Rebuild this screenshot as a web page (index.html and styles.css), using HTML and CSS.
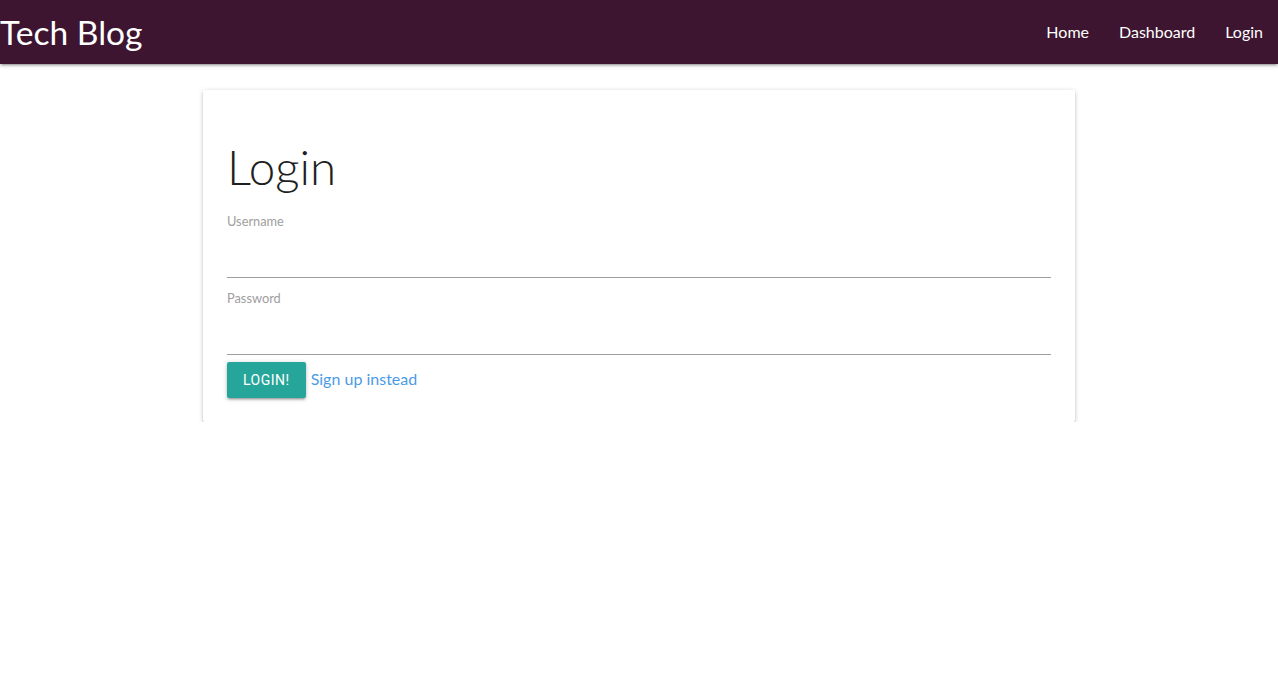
FILE: index.html
```html
<!DOCTYPE html>
<html lang="en">
<head>
<meta charset="utf-8">
<title>Tech Blog</title>
<link rel="stylesheet" href="styles.css">
</head>
<body>
<nav class="navbar">
  <a class="brand" href="#">Tech Blog</a>
  <ul class="nav-links">
    <li><a href="#">Home</a></li>
    <li><a href="#">Dashboard</a></li>
    <li><a href="#">Login</a></li>
  </ul>
</nav>
<main class="container">
  <div class="card">
    <h3 class="title">Login</h3>
    <form class="form">
      <div class="field">
        <label class="label" for="username">Username</label>
        <input class="input" id="username" type="text">
      </div>
      <div class="field field-last">
        <label class="label" for="password">Password</label>
        <input class="input" id="password" type="password">
      </div>
      <div class="actions">
        <button class="btn" type="button">Login!</button>
        <a class="link" href="#">Sign up instead</a>
      </div>
    </form>
  </div>
</main>
</body>
</html>
```
FILE: styles.css
```css
* { box-sizing: border-box; }
html, body { margin: 0; padding: 0; }
body {
  font-family: "Lato", "Noto Sans", sans-serif;
  color: rgba(0,0,0,0.87);
  background: #fff;
}
.navbar {
  height: 64px;
  background: #3d1530;
  display: flex;
  align-items: center;
  justify-content: space-between;
  box-shadow: 0 2px 2px 0 rgba(0,0,0,0.14), 0 3px 1px -2px rgba(0,0,0,0.12), 0 1px 5px 0 rgba(0,0,0,0.2);
}
.brand {
  color: #fff;
  text-decoration: none;
  font-size: 33.6px;
  font-weight: 400;
  line-height: 64px;
}
.nav-links {
  list-style: none;
  margin: 0;
  padding: 0;
  display: flex;
}
.nav-links a {
  display: block;
  padding: 0 15px;
  color: #fff;
  text-decoration: none;
  font-size: 16px;
  line-height: 64px;
}
.container {
  width: 872px;
  margin: 26px auto 0;
}
.card {
  background: #fff;
  padding: 24px;
  border-radius: 2px;
  box-shadow: 0 2px 2px 0 rgba(0,0,0,0.14), 0 3px 1px -2px rgba(0,0,0,0.12), 0 1px 5px 0 rgba(0,0,0,0.2);
}
.title {
  font-size: 47.5px;
  font-weight: 300;
  line-height: 51px;
  margin: 27px 0 22px;
  color: #1f1f1f;
}
.form { display: flex; flex-direction: column; }
.field { display: flex; flex-direction: column; margin-bottom: 13px; }
.field-last { margin-bottom: 7px; }
.label {
  font-size: 12.8px;
  line-height: 14px;
  color: #9e9e9e;
}
.input {
  height: 50px;
  border: none;
  border-bottom: 1px solid #9e9e9e;
  outline: none;
  background: transparent;
  font-size: 16px;
  padding: 0;
}
.actions { display: flex; align-items: center; gap: 5px; }
.btn {
  height: 36px;
  padding: 0 16px;
  border: none;
  border-radius: 2px;
  background: #26a69a;
  color: #fff;
  font-family: "Roboto", sans-serif;
  font-size: 14px;
  font-weight: 400;
  text-transform: uppercase;
  letter-spacing: 0.5px;
  box-shadow: 0 2px 2px 0 rgba(0,0,0,0.14), 0 3px 1px -2px rgba(0,0,0,0.12), 0 1px 5px 0 rgba(0,0,0,0.2);
}
.link {
  color: #4a9be6;
  text-decoration: none;
  font-size: 16px;
  margin-bottom: 3px;
}
```
